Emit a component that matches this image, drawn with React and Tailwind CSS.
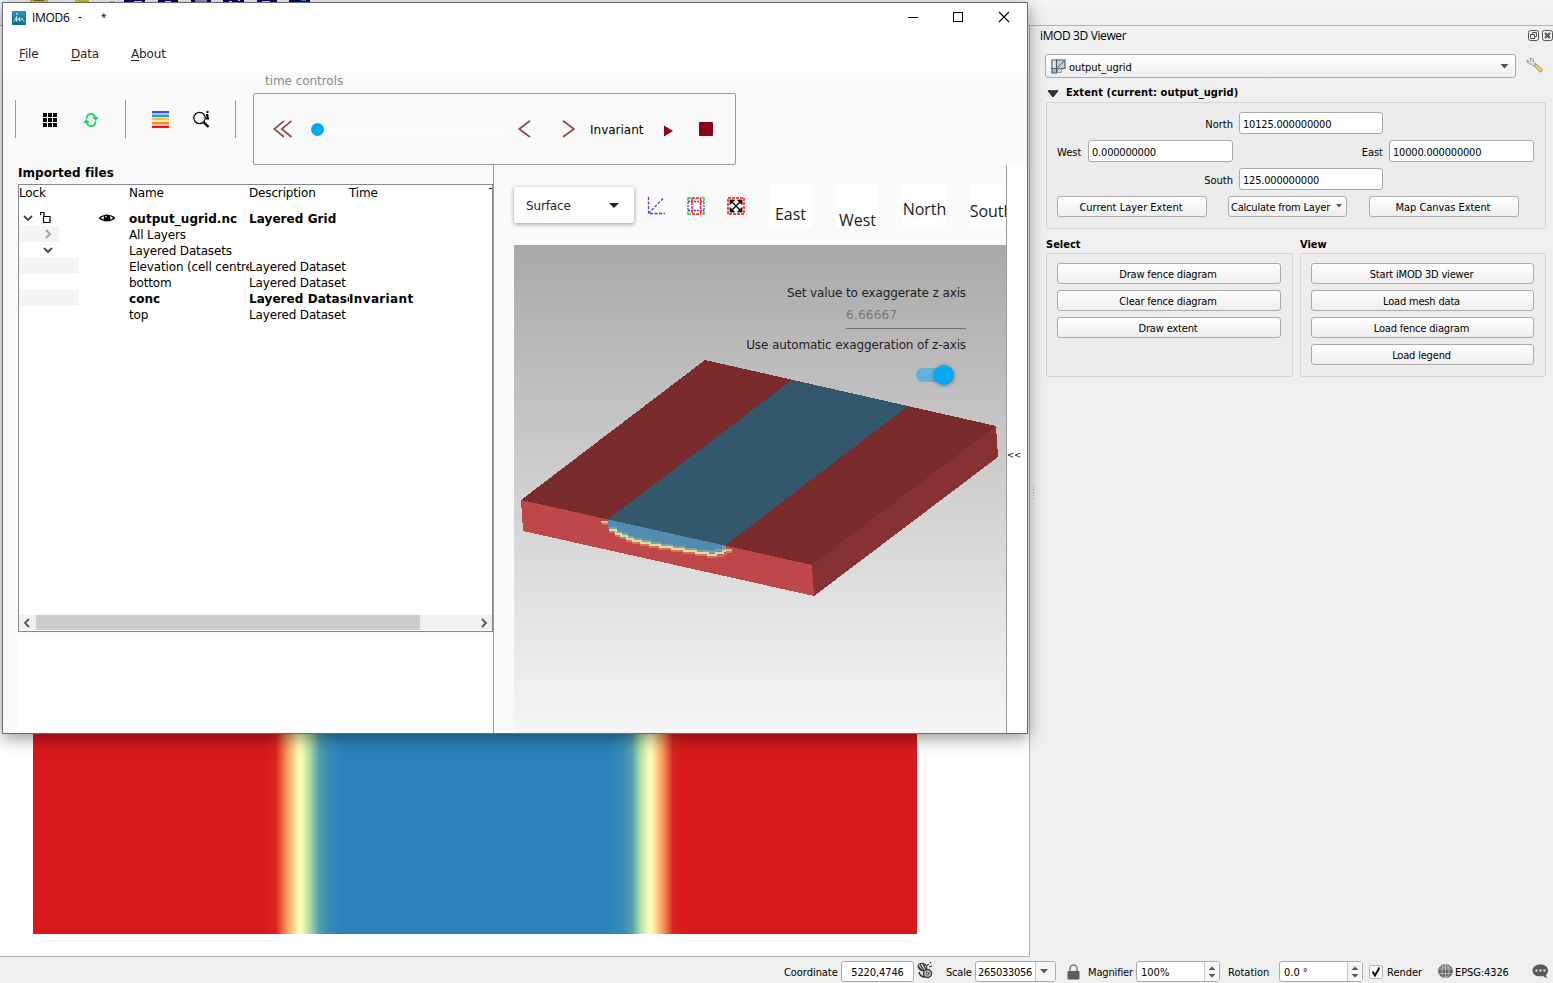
import React from 'react';

const VERD_FACE = "font-['DejaVu_Sans',sans-serif] whitespace-nowrap";
const VERD_SIZE = `${VERD_FACE} text-[12px] leading-[16px]`;
const VERD = `${VERD_SIZE} tracking-[-0.15px]`;
const VERD_BOLD = `${VERD_SIZE} font-bold tracking-[0.06px]`;
const TAH = "font-['DejaVu_Sans_Condensed','DejaVu_Sans',sans-serif] text-[11px] leading-[14px] whitespace-nowrap text-black";
const SEGOE = "font-['Open_Sans',sans-serif] whitespace-nowrap";

/* ---------- host application ---------- */

function ToolbarStrip() {
  return (
    <div className="h-[26px] shrink-0 border-b border-[#b4b4b4] bg-linear-to-b from-[#f6f6f6] to-[#efefef]">
      <svg width="330" height="3" className="block" shapeRendering="crispEdges">
        <path d="M30 0h18v3h-18zM75 0h14v3h-14z" fill="#d9c42a" />
        <path d="M34 0h10v1h-10z" fill="#7a6a10" />
        <path d="M110 1h1v1h-1zM113 1h1v1h-1z" fill="#777" />
        <path d="M124 0h21v3h-21zM158 0h20v3h-20zM191 0h20v3h-20zM223 0h21v3h-21zM257 0h20v3h-20zM289 0h21v3h-21z" fill="#06066e" />
        <path d="M195 0h12v2h-12z" fill="#8d8dc4" />
        <path d="M134 1h8v1h-8zM165 1h6v1h-6zM229 1h3v1h-3zM238 0h2v1h-2zM262 1h8v1h-8z" fill="#d5d5ea" />
        <path d="M301 0h5v1h-5z" fill="#1c9fe8" />
      </svg>
    </div>
  );
}

function MapCanvas() {
  return (
    <div className="flex w-[1030px] shrink-0 items-end border-r border-b border-[#b4b4b4] bg-white pb-[22px] pl-[33px]">
      <div className="h-[700px] w-[884px] bg-[linear-gradient(90deg,#d7191c_0px,#d7191c_232px,#da241f_243px,#f9a45f_255px,#fff8b5_265px,#f5fbb5_269px,#abdda4_277px,#559fb2_286px,#3a8cb6_295px,#2b83ba_307px,#2b83ba_576px,#3a8cb6_590px,#559fb2_599px,#abdda4_607px,#f5fbb5_615px,#fff8b5_619px,#f9a45f_629px,#da241f_640px,#d7191c_650px)]" />
    </div>
  );
}

function Field({ className = '', children }) {
  return (
    <div className={`${TAH} flex h-[22px] items-center rounded-[3px] border border-[#ababab] bg-white pt-[3px] pl-[3px] tracking-[-0.2px] ${className}`}>
      {children}
    </div>
  );
}

function Button({ className = '', children }) {
  return (
    <div className={`${TAH} flex h-[21px] items-center justify-center rounded-[3px] border border-[#ababab] bg-linear-to-b from-white to-[#eeeeee] pt-[2px] pr-[2px] ${className}`}>
      {children}
    </div>
  );
}

const GROUP = 'rounded-[2px] border border-[#d3d3d3] bg-[#ececec]';

function Dock() {
  return (
    <div className="flex min-w-0 flex-1">
      <div className="flex w-[6px] shrink-0 flex-col items-center gap-[2px] pt-[460px]">
        <span className="size-px bg-[#b0b0b0]" />
        <span className="size-px bg-[#b0b0b0]" />
        <span className="size-px bg-[#b0b0b0]" />
        <span className="size-px bg-[#b0b0b0]" />
        <span className="size-px bg-[#b0b0b0]" />
      </div>
      <div className="-ml-[6px] flex min-w-0 flex-1 flex-col">
        <div className="flex h-[28px] items-center justify-between pl-[10px]">
          <span className={`${SEGOE} -mt-[9px] text-[12px] leading-[16px] tracking-[-0.38px] text-black`}>iMOD 3D Viewer</span>
          <svg width="25" height="12" viewBox="0 0 25 12" fill="none" stroke="#555" className="-mt-[8px]">
            <rect x="0.5" y="0.5" width="10" height="10" rx="2" />
            <path d="M4.500 4.500v-2h4v4H7M2.500 4.500h4v4h-4z" />
            <rect x="14.5" y="0.5" width="10" height="10" rx="2" />
            <path d="M17 3l5 5M22 3l-5 5" strokeWidth="2" />
          </svg>
        </div>
        <div className="flex h-[24px] items-center pl-[15px]">
          <div className={`${TAH} flex h-[24px] w-[471px] items-center rounded-[3px] border border-[#ababab] bg-linear-to-b from-white to-[#eeeeee] pl-[5px]`}>
            <svg width="15" height="15" viewBox="0 0 15 15" className="mr-[3px]">
              <path d="M1 1h4.500v8.500H1z" fill="#e4edf4" stroke="#4d5d6c" strokeWidth="1.200" />
              <path d="M5.500 1H14v8.500H5.500z" fill="#b9d0e3" stroke="#4d5d6c" strokeWidth="1.200" />
              <path d="M6.500 8.500L13.500 1.500" stroke="#4d5d6c" />
              <path d="M1 9.500h4.500V14H1z" fill="#9cc4e0" stroke="#4d5d6c" strokeWidth="1.200" />
              <path d="M6.500 10h4v3.500h-4z" fill="#ddd" stroke="#999" />
            </svg>
            <span className="pt-[3px] tracking-[-0.05px]">output_ugrid</span>
            <svg width="9" height="5" className="mr-[6px] ml-auto"><path d="M0.500 0h8L4.500 4.500z" fill="#555" /></svg>
          </div>
          <svg width="17" height="17" viewBox="0 0 17 17" className="mb-[2px] ml-[10px]">
            <path d="M1 3l2.500 1.800L5 3.500 3.800 1C6 .6 8 2 7.600 5L10 7.200 7.800 9.400 5.500 7C3 7.600.8 6 1 3z" fill="#e0e3e3" stroke="#8d9292" strokeWidth="0.900" />
            <path d="M8.200 8.800l1.700-1.800 6 5.200c1 1.200-.8 3.600-2.200 2.600z" fill="#f2d873" stroke="#8f7d48" strokeWidth="0.900" />
          </svg>
        </div>
        <div className="flex h-[24px] items-center pt-[6px] pl-[17px]">
          <svg width="12" height="8" className="mt-px"><path d="M1 .8h10L6 7z" fill="#333" stroke="#222" /></svg>
          <span className={`${TAH} ml-[7px] font-bold tracking-[0.1px]`}>Extent (current: output_ugrid)</span>
        </div>
        <div className={`${GROUP} ml-[16px] flex h-[127px] w-[500px] flex-col gap-[6px] pt-[9px] pl-[10px]`}>
          <div className="flex items-center">
            <span className={`${TAH} w-[176px] pt-[3px] text-right`}>North</span>
            <Field className="ml-[6px] w-[144px]">10125.000000000</Field>
          </div>
          <div className="flex items-center">
            <span className={`${TAH} w-[31px] pt-[3px]`}>West</span>
            <Field className="w-[145px]">0.000000000</Field>
            <span className={`${TAH} w-[150px] pt-[3px] text-right`}>East</span>
            <Field className="ml-[6px] w-[145px]">10000.000000000</Field>
          </div>
          <div className="flex items-center">
            <span className={`${TAH} w-[176px] pt-[3px] text-right`}>South</span>
            <Field className="ml-[6px] w-[144px]">125.000000000</Field>
          </div>
          <div className="flex items-center">
            <Button className="w-[150px]">Current Layer Extent</Button>
            <Button className="ml-[21px] w-[119px] tracking-[-0.2px]">
              Calculate from Layer
              <svg width="6" height="4" className="mb-[4px] ml-[6px]"><path d="M0 0h6L3 3.500z" fill="#555" /></svg>
            </Button>
            <Button className="ml-[22px] w-[150px] tracking-[-0.05px]">Map Canvas Extent</Button>
          </div>
        </div>
        <div className="mt-[8px] ml-[16px] flex gap-[7px]">
          <div className="w-[247px]">
            <div className={`${TAH} h-[16px] pt-px font-bold`}>Select</div>
            <div className={`${GROUP} flex h-[124px] flex-col gap-[6px] pt-[9px] pr-[11px] pl-[10px] tracking-[-0.18px]`}>
              <Button>Draw fence diagram</Button>
              <Button>Clear fence diagram</Button>
              <Button>Draw extent</Button>
            </div>
          </div>
          <div className="w-[246px]">
            <div className={`${TAH} h-[16px] pt-px font-bold`}>View</div>
            <div className={`${GROUP} flex h-[124px] flex-col gap-[6px] pt-[9px] pr-[11px] pl-[10px] tracking-[-0.18px]`}>
              <Button>Start iMOD 3D viewer</Button>
              <Button>Load mesh data</Button>
              <Button>Load fence diagram</Button>
              <Button>Load legend</Button>
            </div>
          </div>
        </div>
      </div>
    </div>
  );
}

function Spin({ children }) {
  return (
    <div className={`${TAH} flex h-[21px] w-[84px] items-center rounded-[3px] border border-[#ababab] bg-white pl-[4px]`}>
      <span className="pt-[2px]">{children}</span>
      <span className="ml-auto flex h-full w-[15px] items-center justify-center border-l border-[#c4c4c4] bg-[#f6f6f6]">
        <svg width="8" height="12"><path d="M0.500 4h7L4 0.500zM0.500 8h7L4 11.500z" fill="#555" /></svg>
      </span>
    </div>
  );
}

function StatusBar() {
  return (
    <div className="flex h-[26px] shrink-0 items-center pt-[3px] pl-[784px]">
      <span className={`${TAH} w-[57px] pt-[2px] tracking-[-0.05px]`}>Coordinate</span>
      <div className={`${TAH} flex h-[21px] w-[73px] items-center justify-center rounded-[3px] border border-[#ababab] bg-white pt-[2px] tracking-[-0.1px]`}>5220,4746</div>
      <svg width="17" height="17" viewBox="0 0 17 17" className="mb-[2px] ml-[3px]" fill="none" stroke="#333">
        <ellipse cx="5.500" cy="5" rx="4.500" ry="3.500" fill="#ddd" transform="rotate(25 5.500 5)" />
        <path d="M3 2l4 7M6 1.500l3 6M1 4l4 5" strokeWidth="1.400" />
        <path d="M9 4l3-2M12 5l3-1M13 1l1-1" strokeWidth="1.200" />
        <circle cx="10.500" cy="11.500" r="4" fill="#ccc" strokeWidth="1.400" />
        <circle cx="10.500" cy="11.500" r="1.500" />
        <path d="M2 10c1 4 4 5 6 5" strokeWidth="1.500" />
      </svg>
      <span className={`${TAH} ml-[12px] w-[29px] pt-[2px] tracking-[-0.2px]`}>Scale</span>
      <div className={`${TAH} flex h-[21px] w-[81px] items-center rounded-[3px] border border-[#ababab] bg-white pl-[2px] tracking-[-0.3px]`}>
        <span className="pt-[2px]">265033056</span>
        <span className="ml-auto flex h-full w-[20px] items-center justify-center border-l border-[#c4c4c4] bg-[#f6f6f6] pr-[3px]">
          <svg width="8" height="5"><path d="M0 0h8L4 4.500z" fill="#555" /></svg>
        </span>
      </div>
      <svg width="13" height="16" viewBox="0 0 13 16" className="ml-[11px]">
        <path d="M3 8V4.500a3.500 3.500 0 017 0V8" fill="none" stroke="#777" strokeWidth="1.500" />
        <rect x="0.500" y="7" width="12" height="8.500" rx="1" fill="#5c5c5c" />
      </svg>
      <span className={`${TAH} ml-[8px] w-[48px] pt-[2px] tracking-[-0.15px]`}>Magnifier</span>
      <Spin>100%</Spin>
      <span className={`${TAH} ml-[8px] w-[51px] pt-[2px]`}>Rotation</span>
      <Spin>0.0 °</Spin>
      <svg width="14" height="14" viewBox="0 0 14 14" className="ml-[6px]">
        <rect x="0.500" y="0.500" width="13" height="13" rx="1.500" fill="#fff" stroke="#b8b8b8" />
        <path d="M3.500 6.500l2.500 4 4.500-8" fill="none" stroke="#111" strokeWidth="2" />
      </svg>
      <span className={`${TAH} ml-[4px] w-[51px] pt-[2px]`}>Render</span>
      <svg width="15" height="14" viewBox="0 0 15 14" className="mb-px" fill="none" stroke="#d0d0d0" strokeWidth="0.700">
        <ellipse cx="7.500" cy="7" rx="7.200" ry="6.600" fill="#666" stroke="#666" />
        <path d="M0 5h15M0 9.500h15M7.500 0v14M2 2.500c3 1 8 1 11 0" />
        <ellipse cx="7.500" cy="7" rx="3.600" ry="6.600" />
      </svg>
      <span className={`${TAH} ml-[2px] w-[77px] pt-[2px] tracking-[-0.1px]`}>EPSG:4326</span>
      <svg width="17" height="15" viewBox="0 0 17 15">
        <path d="M8.500.5c4.500 0 7.500 2.500 7.500 6 0 2-1 3.400-2 4.200l.8 3.800-3.800-2.400C4 13.200.5 10.400.5 6.500.5 3 4 .5 8.500.5z" fill="#5a5a5a" />
        <path d="M3.500 5.500h2v2h-2zM7.500 5.500h2v2h-2zM11.500 5.500h2v2h-2z" fill="#eee" />
      </svg>
    </div>
  );
}

/* ---------- viewer window ---------- */

function TitleBar() {
  return (
    <div className="flex h-[30px] shrink-0 items-center bg-white pb-[2px] pl-[9px]">
      <svg width="14" height="14" viewBox="0 0 14 14" className="mt-px">
        <defs>
          <linearGradient id="logo" x1="0" y1="0" x2="0" y2="1">
            <stop offset="0" stopColor="#2f8fae" />
            <stop offset="1" stopColor="#0e6f98" />
          </linearGradient>
        </defs>
        <rect width="14" height="14" fill="url(#logo)" />
        <path d="M1.500 10.500C3 10 3.800 8 4.500 5.500M4.500 5.500v4.500c1.500 0 2-3 3-3.500v3.500c1.500 0 1.500-3 2.500-3 .8 1 .5 3 2.500 3.500" fill="none" stroke="#d4ecf4" strokeWidth="1" />
        <path d="M4 2h1.500v1.500H4z" fill="#d4ecf4" />
      </svg>
      <span className={`${SEGOE} ml-[6px] w-[46px] pt-px text-[12px] leading-[16px] tracking-[-0.3px] text-black`}>IMOD6</span>
      <span className={`${SEGOE} w-[23px] text-[12px] text-black`}>-</span>
      <span className={`${SEGOE} text-[10px] text-black`}>*</span>
      <svg width="104" height="12" viewBox="0 0 104 12" fill="none" stroke="#000" className="mr-[16px] ml-auto">
        <path d="M1 6.500h10M46.500 1.500h9v9h-9z" shapeRendering="crispEdges" />
        <path d="M92 1l10 10M102 1L92 11" strokeWidth="1.100" />
      </svg>
    </div>
  );
}

function MenuBar() {
  const items = [['F', 'ile', 'w-[52px]'], ['D', 'ata', 'w-[60px]'], ['A', 'bout', 'w-[60px]']];
  return (
    <div className="flex h-[40px] shrink-0 items-center bg-white pt-[2px] pl-[16px]">
      {items.map(([key, rest, width]) => (
        <span key={key} className={`${VERD} ${width} text-[#262626]`}>
          <span className="underline underline-offset-2">{key}</span>{rest}
        </span>
      ))}
    </div>
  );
}

function ToolBar() {
  return (
    <div className="flex h-[92px] shrink-0 pl-[12px]">
      <div className="mt-[27px] flex h-[38px] w-[110px] items-center border-l border-[#999]">
        <svg width="14" height="14" className="mt-[2px] ml-[27px]" shapeRendering="crispEdges">
          <path d="M0 0h4v4H0zM5 0h4v4H5zM10 0h4v4h-4zM0 5h4v4H0zM5 5h4v4H5zM10 5h4v4h-4zM0 10h4v4H0zM5 10h4v4H5zM10 10h4v4h-4z" fill="#000" />
        </svg>
        <svg width="16" height="16" viewBox="0 0 16 16" className="mt-px ml-[26px]" fill="none" stroke="#1fd655" strokeWidth="1.800">
          <path d="M3.500 6.800C3.500 3.500 5.500 1.800 8 1.800c1.800 0 3.600 1.400 4.200 3.400" />
          <path d="M12.500 9.200C12.500 12.500 10.500 14.200 8 14.200c-1.800 0-3.600-1.400-4.200-3.400" />
          <path d="M9 5h6.800L12.800 9zM7 11H.2L3.200 7z" fill="#1fd655" stroke="none" />
        </svg>
      </div>
      <div className="mt-[27px] flex h-[38px] w-[110px] items-center border-l border-[#999]">
        <svg width="17" height="17" className="mt-px ml-[26px]" shapeRendering="crispEdges">
          <path d="M0 0h17v2H0z" fill="#4350cf" />
          <path d="M0 2h17v2H0z" fill="#a9c4ee" />
          <path d="M0 4h17v2H0z" fill="#08a3ee" />
          <path d="M0 6h17v1H0z" fill="#d8e6b8" />
          <path d="M0 7h17v2H0z" fill="#ffc52d" />
          <path d="M0 9h17v2H0z" fill="#ffe9a8" />
          <path d="M0 11h17v2H0z" fill="#ff7f32" />
          <path d="M0 13h17v2H0z" fill="#ffc0a0" />
          <path d="M0 15h17v2H0z" fill="#ff0a0a" />
        </svg>
        <svg width="18" height="18" viewBox="0 0 18 18" className="ml-[23px]" fill="none" stroke="#000">
          <circle cx="7.500" cy="8" r="5.700" strokeWidth="1.200" />
          <path d="M11.500 12l5 5" strokeWidth="2.400" />
          <path d="M15.500 1v2M15.500 4.500v4.500M14 5h2M14 8.500h3" strokeWidth="1.900" />
        </svg>
      </div>
      <div className="mt-[27px] h-[38px] w-[18px] border-l border-[#999]" />
      <div className="flex flex-col">
        <span className={`${VERD_SIZE} h-[20px] pl-[12px] tracking-[-0.05px] text-[#8a8a8a]`}>time controls</span>
        <div className="flex h-[72px] w-[483px] items-center rounded-[2px] border border-[#999] pl-[20px]">
          <svg width="19" height="18" viewBox="0 0 19 18" className="-ml-px" fill="none" stroke="#93494b" strokeWidth="1.700">
            <path d="M11 .8L1.200 9 11 17M18.500 .8L8.700 9l9.800 8" />
          </svg>
          <div className="ml-[19px] flex h-[13px] w-[187px] items-center">
            <span className="size-[13px] rounded-full bg-[#03a9f4]" />
            <span className="h-px flex-1 bg-white" />
          </div>
          <svg width="13" height="18" viewBox="0 0 13 18" className="ml-[20px]" fill="none" stroke="#93494b" strokeWidth="1.700">
            <path d="M12 .8L1.200 9l10.800 8" />
          </svg>
          <svg width="13" height="18" viewBox="0 0 13 18" className="ml-[31px]" fill="none" stroke="#93494b" strokeWidth="1.700">
            <path d="M1 .8L11.800 9 1 17" />
          </svg>
          <span className={`${VERD_SIZE} ml-[15px] w-[74px] pt-[2px] tracking-[0px] text-black`}>Invariant</span>
          <svg width="9" height="12" viewBox="0 0 9 12" className="mt-[3px]"><path d="M0 .5L9 6 0 11.500z" fill="#8c0019" /></svg>
          <span className="ml-[26px] size-[14px] rounded-[1px] bg-[#8c0019]" />
        </div>
      </div>
    </div>
  );
}

function Chevron({ dir, className = '', stroke = '#444' }) {
  const d = { down: 'M1 3l4 4 4-4', right: 'M3 1l4 4-4 4', left: 'M7 1L3 5l4 4' }[dir];
  return (
    <svg width="10" height="10" viewBox="0 0 10 10" className={className} fill="none" stroke={stroke} strokeWidth="1.800">
      <path d={d} />
    </svg>
  );
}

function Row({ lead, shade = '', name, desc = '', time = '', bold = false }) {
  return (
    <div className={`${bold ? VERD_BOLD : VERD} flex h-[16px] text-black`}>
      <div className="w-[110px] shrink-0"><div className={`-mt-px flex h-[16px] items-center ${shade}`}>{lead}</div></div>
      <div className="w-[120px] shrink-0 overflow-hidden">{name}</div>
      <div className="w-[100px] shrink-0 overflow-hidden">{desc}</div>
      <div className={bold ? 'tracking-[0.35px]' : ''}>{time}</div>
    </div>
  );
}

function FilesPanel() {
  return (
    <div className="flex w-[491px] shrink-0 flex-col border-r border-[#999] pl-[15px]">
      <div className={`${VERD_BOLD} h-[19px] text-black`}>Imported files</div>
      <div className="flex h-[448px] shrink-0 flex-col border border-[#828790] bg-white">
        <div className={`${VERD} flex h-[26px] text-black`}>
          <span className="w-[110px] shrink-0">Lock</span>
          <span className="w-[120px] shrink-0">Name</span>
          <span className="w-[100px] shrink-0">Description</span>
          <span className="w-[140px] shrink-0">Time</span>
          <svg width="3" height="6" className="mt-[3px]"><path d="M0 0h3v1H0z" fill="#222" /></svg>
        </div>
        <Row bold name="output_ugrid.nc" desc="Layered Grid" lead={
          <>
            <Chevron dir="down" className="ml-[4px]" />
            <svg width="11" height="11" viewBox="0 0 11 11" className="mb-px ml-[7px]" fill="none" stroke="#000">
              <path d="M3.500 4.500h6.500v6H3.500zM.5 3V.5h3.500V4.500" strokeWidth="1.200" />
            </svg>
            <svg width="16" height="10" viewBox="0 0 16 10" className="ml-[48px]">
              <path d="M.5 5C4 1.500 12 1.500 15.500 5 12 8.500 4 8.500 .5 5z" fill="#fff" stroke="#000" strokeWidth="1.200" />
              <circle cx="8" cy="4.800" r="3.300" fill="#000" />
              <circle cx="7" cy="3.800" r="0.800" fill="#fff" />
            </svg>
          </>
        } />
        <Row name="All Layers" shade="w-[40px] bg-[#f4f4f4]" lead={<Chevron dir="right" className="ml-[24px]" stroke="#a0a0a0" />} />
        <Row name="Layered Datasets" lead={<Chevron dir="down" className="mb-px ml-[24px]" />} />
        <Row name="Elevation (cell centre)" desc="Layered Dataset" shade="w-[60px] bg-[#f4f4f4]" />
        <Row name="bottom" desc="Layered Dataset" />
        <Row bold name="conc" desc="Layered Dataset" time="Invariant" shade="w-[60px] bg-[#f4f4f4]" />
        <Row name="top" desc="Layered Dataset" />
        <div className="mt-auto mb-px flex h-[15px] items-center bg-[#f0f0f0]">
          <Chevron dir="left" className="ml-[3px]" stroke="#555" />
          <div className="ml-[4px] h-[15px] w-[384px] bg-[#cdcdcd]" />
          <Chevron dir="right" className="mr-[3px] ml-auto" stroke="#555" />
        </div>
      </div>
      <div className="mt-[5px] flex-1 bg-white" />
    </div>
  );
}

function Scene() {
  return (
    <svg width="492" height="488" viewBox="514 245 492 488" className="col-start-1 row-start-1 block" shapeRendering="crispEdges">
      <defs>
        <linearGradient id="sky" x1="0" y1="0" x2="0" y2="1">
          <stop offset="0" stopColor="#a9a9a9" />
          <stop offset="1" stopColor="#f6f6f6" />
        </linearGradient>
      </defs>
      <rect x="514" y="245" width="492" height="488" fill="url(#sky)" />
      <path d="M521 500L812 565 814 596 523 531z" fill="#be4749" />
      <path d="M608 517L725 543V552L718 555 711 556 700 554 683 551 655 546 637 542 623 537 616 532 608 528z" fill="#558bae" />
      <g fill="none" strokeWidth="2">
        <path d="M609 532h7v4h5v2h6v3h6v2h8v2h9v2h10v2h12v2h12v2h12v2h12v2h8v-1h7v-2h4" stroke="#cf7558" />
        <path d="M609 528h7v4h5v2h6v3h6v2h8v2h9v2h10v2h12v2h12v2h12v2h12v1h8v-2h7v-2h3" stroke="#76a9a3" />
        <path d="M609 530h7v4h5v2h6v3h6v2h8v2h9v2h10v2h12v2h12v2h12v2h12v2h8v-2h7v-2h4" stroke="#ded9a8" />
        <path d="M601 522h7M725 550h7" stroke="#e0c08c" />
        <path d="M602 524h6M726 552h6" stroke="#d07c5c" />
      </g>
      <path d="M521 500L705 360 996 426 812 565z" fill="#7a2b2c" />
      <path d="M608 519.400L792 380 908 406 725 545.600z" fill="#33576d" />
      <path d="M812 565L996 426 998 457 814 596z" fill="#873133" />
    </svg>
  );
}

function Compass({ className, text }) {
  return (
    <span className={`${SEGOE} mr-[24px] flex h-[43px] w-[43px] shrink-0 justify-center bg-white text-[16px] leading-[20px] text-[#1c1c1c] ${className}`}>
      {text}
    </span>
  );
}

function ViewPanel() {
  return (
    <div className="flex w-[513px] shrink-0 flex-col overflow-hidden border-r border-[#999] pl-[20px]">
      <div className="-ml-[6px] flex h-[80px] shrink-0 items-center overflow-hidden pl-[6px]">
        <div className={`${VERD} flex h-[36px] w-[120px] shrink-0 items-center rounded-[2px] bg-white pl-[12px] text-[#262626] shadow-[0_1px_4px_rgba(0,0,0,0.4)]`}>
          <span className="pt-[2px]">Surface</span>
          <svg width="10" height="5" className="mr-[15px] ml-auto"><path d="M0 0h10L5 5z" fill="#222" /></svg>
        </div>
        <svg width="18" height="18" viewBox="0 0 18 18" className="mt-px ml-[13px] shrink-0" fill="none" stroke="#4747d8" strokeWidth="1.300" strokeDasharray="3 1.500">
          <path d="M1.500 0v16.500H18M1.500 16.500L16 1.500" />
        </svg>
        <svg width="18" height="18" viewBox="0 0 18 18" className="mt-px ml-[22px] shrink-0" fill="none" strokeWidth="1.300">
          <path d="M1 5v8M17 5v8M1 4.500h16M1 13.500h16" stroke="#4747d8" strokeDasharray="2 1" />
          <path d="M5 1h9M5 17h9M5 1v16M13.500 1v16" stroke="#ff1010" strokeDasharray="3 1" />
          <path d="M1 4V1h3M14.500 1H17v3M1 14v3h3M14.500 17H17v-3" stroke="#20c840" />
        </svg>
        <svg width="18" height="18" viewBox="0 0 18 18" className="mt-px ml-[22px] shrink-0" fill="none">
          <path d="M1 1h16v16H1z" stroke="#ff1010" strokeWidth="1.500" strokeDasharray="3 1" />
          <path d="M5 5l8 8M13 5l-8 8" stroke="#000" strokeWidth="1.300" />
          <path d="M3 3h4.500L3 7.500zM15 3h-4.500L15 7.500zM3 15h4.500L3 10.500zM15 15h-4.500l4.500-4.500z" fill="#000" stroke="#000" strokeWidth="0.800" />
        </svg>
        <Compass className="ml-[24px] pt-[20px]" text="East" />
        <Compass className="pt-[26px]" text="West" />
        <Compass className="pt-[15px]" text="North" />
        <Compass className="pt-[17px]" text="South" />
      </div>
      <div className="grid">
        <Scene />
        <div className={`${VERD_SIZE} col-start-1 row-start-1 flex flex-col items-end pt-[40px] pr-[40px] text-[#1f1f1f]`}>
          <span className="tracking-[-0.12px]">Set value to exaggerate z axis</span>
          <span className="mt-[6px] h-[22px] w-[120px] border-b border-[#707070] tracking-[0.25px] text-[#777]">6.66667</span>
          <span className="mt-[8px] tracking-[-0.12px]">Use automatic exaggeration of z-axis</span>
          <div className="mt-[12px] mr-[12px] flex h-[20px] w-[38px] items-center">
            <span className="h-[14px] w-[28px] shrink-0 rounded-full bg-[#62b1da]" />
            <span className="-ml-[10px] size-[20px] shrink-0 rounded-full bg-[#03a9f4] shadow-[0_1px_4px_rgba(0,0,0,0.4)]" />
          </div>
        </div>
      </div>
    </div>
  );
}

function ViewerWindow() {
  return (
    <div className="absolute top-[2px] left-[2px] flex h-[732px] w-[1026px] flex-col border border-[#6b6b6b] bg-[#fafafa] shadow-[0_4px_16px_rgba(0,0,0,0.42)]">
      <TitleBar />
      <MenuBar />
      <ToolBar />
      <div className="flex min-h-0 flex-1">
        <FilesPanel />
        <ViewPanel />
        <div className="flex flex-1 flex-col bg-white pt-[282px]">
          <span className={`${VERD_FACE} text-[8.5px] leading-[16px] text-black`}>&lt;&lt;</span>
        </div>
      </div>
    </div>
  );
}

export default function App() {
  return (
    <div className="relative flex h-[983px] w-[1553px] flex-col overflow-hidden bg-[#efefef]">
      <ToolbarStrip />
      <div className="flex h-[931px] shrink-0">
        <MapCanvas />
        <Dock />
      </div>
      <StatusBar />
      <ViewerWindow />
    </div>
  );
}
